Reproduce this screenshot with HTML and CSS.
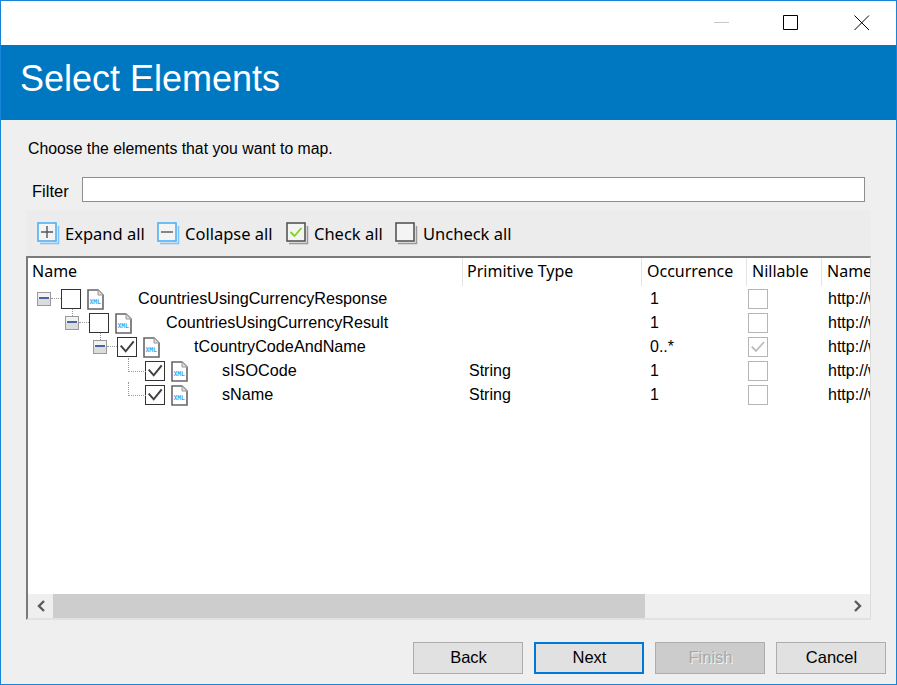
FILE: index.html
```html
<!DOCTYPE html>
<html lang="en">
<head>
    <meta charset="UTF-8">
    <meta name="viewport" content="width=device-width, initial-scale=1.0">
    <title>Select Elements</title>
    <link rel="stylesheet" href="styles.css">
</head>
<body>
    <div class="window">
        <div class="titlebar">
            <svg class="winbtn winbtn-min" width="16" height="16"><path d="M0 7.5H15" stroke="#c8c8c8" fill="none"/></svg>
            <svg class="winbtn" width="16" height="16"><path d="M.5.5H14.5V14.5H.5Z" stroke="#000" fill="none"/></svg>
            <svg class="winbtn" width="16" height="16"><path d="M.5.5L15 15M15 .5L.5 15" stroke="#000" fill="none"/></svg>
        </div>
        <div class="banner">Select Elements</div>

        <div class="content">
            <p class="intro">Choose the elements that you want to map.</p>
            <div class="filter">
                <label>Filter</label>
                <input type="text">
            </div>

            <div class="toolbar">
                <div class="tool tool-expand">
                    <svg width="23" height="23" viewBox="0 0 23 23"><path d="M3 21.5H21.5V4" fill="none" stroke="#7cc4fa" stroke-width="1.5"/><rect x="1" y="1" width="18" height="18" fill="#f4f4f4" stroke="#4fb0f8" stroke-width="1.6"/><path d="M10 4V16M4 10H16" stroke="#555" stroke-width="1.4"/></svg>
                    <span>Expand all</span>
                </div>
                <div class="tool tool-collapse">
                    <svg width="23" height="23" viewBox="0 0 23 23"><path d="M3 21.5H21.5V4" fill="none" stroke="#7cc4fa" stroke-width="1.5"/><rect x="1" y="1" width="18" height="18" fill="#f4f4f4" stroke="#4fb0f8" stroke-width="1.6"/><path d="M4 10H16" stroke="#555" stroke-width="1.4"/></svg>
                    <span>Collapse all</span>
                </div>
                <div class="tool tool-check">
                    <svg width="23" height="23" viewBox="0 0 23 23"><path d="M3 21.5H21.5V4" fill="none" stroke="#999" stroke-width="1.5"/><rect x="1" y="1" width="18" height="18" fill="#f4f4f4" stroke="#555" stroke-width="1.6"/><path d="M4.5 10L8.5 14L15.5 6" fill="none" stroke="#7ed321" stroke-width="1.8"/></svg>
                    <span>Check all</span>
                </div>
                <div class="tool tool-uncheck">
                    <svg width="23" height="23" viewBox="0 0 23 23"><path d="M3 21.5H21.5V4" fill="none" stroke="#999" stroke-width="1.5"/><rect x="1" y="1" width="18" height="18" fill="#f4f4f4" stroke="#555" stroke-width="1.6"/></svg>
                    <span>Uncheck all</span>
                </div>
            </div>

            <div class="grid-box">
                <div class="grid-scroll">
                    <div class="row head">
                        <div>Name</div>
                        <div>Primitive Type</div>
                        <div>Occurrence</div>
                        <div>Nillable</div>
                        <div>Name</div>
                    </div>

                    <div class="row item">
                        <div class="tree level0 link-down">
                            <span class="expander"></span>
                            <span class="check"></span>
                            <svg class="xml" width="17" height="21" viewBox="0 0 17 21"><path d="M1 1H11L16 6V20H1Z" fill="#fff" stroke="#666" stroke-width="1.6"/><path d="M11 1V6H16" fill="#ddd" stroke="#999"/><text x="2.4" y="15" class="xml-text">XML</text></svg>
                            <span class="label">CountriesUsingCurrencyResponse</span>
                        </div>
                        <div class="type"></div>
                        <div class="occ">1</div>
                        <div class="nil-cell"><span class="nil"></span></div>
                        <div class="ns">http://www</div>
                    </div>

                    <div class="row item">
                        <div class="tree level1 link-down">
                            <span class="expander"></span>
                            <span class="check"></span>
                            <svg class="xml" width="17" height="21" viewBox="0 0 17 21"><path d="M1 1H11L16 6V20H1Z" fill="#fff" stroke="#666" stroke-width="1.6"/><path d="M11 1V6H16" fill="#ddd" stroke="#999"/><text x="2.4" y="15" class="xml-text">XML</text></svg>
                            <span class="label">CountriesUsingCurrencyResult</span>
                        </div>
                        <div class="type"></div>
                        <div class="occ">1</div>
                        <div class="nil-cell"><span class="nil"></span></div>
                        <div class="ns">http://www</div>
                    </div>

                    <div class="row item">
                        <div class="tree level2">
                            <span class="expander"></span>
                            <span class="check"><svg width="18" height="18" viewBox="0 0 18 18"><path d="M2.7 7.7L7.7 13.3L15.7 3.3" fill="none" stroke="#3f3f3f" stroke-width="2"/></svg></span>
                            <svg class="xml" width="17" height="21" viewBox="0 0 17 21"><path d="M1 1H11L16 6V20H1Z" fill="#fff" stroke="#666" stroke-width="1.6"/><path d="M11 1V6H16" fill="#ddd" stroke="#999"/><text x="2.4" y="15" class="xml-text">XML</text></svg>
                            <span class="label">tCountryCodeAndName</span>
                        </div>
                        <div class="type"></div>
                        <div class="occ">0..*</div>
                        <div class="nil-cell"><span class="nil"><svg width="18" height="18" viewBox="0 0 18 18"><path d="M2.7 8.7L7 13L15 4" fill="none" stroke="#bbb" stroke-width="1.8"/></svg></span></div>
                        <div class="ns">http://www</div>
                    </div>

                    <div class="row item">
                        <div class="tree level3 leaf">
                            <span class="check"><svg width="18" height="18" viewBox="0 0 18 18"><path d="M2.7 7.7L7.7 13.3L15.7 3.3" fill="none" stroke="#3f3f3f" stroke-width="2"/></svg></span>
                            <svg class="xml" width="17" height="21" viewBox="0 0 17 21"><path d="M1 1H11L16 6V20H1Z" fill="#fff" stroke="#666" stroke-width="1.6"/><path d="M11 1V6H16" fill="#ddd" stroke="#999"/><text x="2.4" y="15" class="xml-text">XML</text></svg>
                            <span class="label">sISOCode</span>
                        </div>
                        <div class="type">String</div>
                        <div class="occ">1</div>
                        <div class="nil-cell"><span class="nil"></span></div>
                        <div class="ns">http://www</div>
                    </div>

                    <div class="row item">
                        <div class="tree level3 leaf">
                            <span class="check"><svg width="18" height="18" viewBox="0 0 18 18"><path d="M2.7 7.7L7.7 13.3L15.7 3.3" fill="none" stroke="#3f3f3f" stroke-width="2"/></svg></span>
                            <svg class="xml" width="17" height="21" viewBox="0 0 17 21"><path d="M1 1H11L16 6V20H1Z" fill="#fff" stroke="#666" stroke-width="1.6"/><path d="M11 1V6H16" fill="#ddd" stroke="#999"/><text x="2.4" y="15" class="xml-text">XML</text></svg>
                            <span class="label">sName</span>
                        </div>
                        <div class="type">String</div>
                        <div class="occ">1</div>
                        <div class="nil-cell"><span class="nil"></span></div>
                        <div class="ns">http://www</div>
                    </div>
                </div>

                <div class="hscroll">
                    <div class="arrow"><svg width="10" height="12" viewBox="0 0 10 12"><path d="M8 1L3 6L8 11" fill="none" stroke="#5a5a5a" stroke-width="2.4"/></svg></div>
                    <div class="track"><div class="thumb"></div></div>
                    <div class="arrow"><svg width="10" height="12" viewBox="0 0 10 12"><path d="M2 1L7 6L2 11" fill="none" stroke="#5a5a5a" stroke-width="2.4"/></svg></div>
                </div>
            </div>

            <div class="buttons">
                <button>Back</button>
                <button class="primary">Next</button>
                <button class="disabled">Finish</button>
                <button>Cancel</button>
            </div>
        </div>
    </div>
</body>
</html>
```

FILE: styles.css
```css
* {
    box-sizing: border-box;
}
html, body {
    margin: 0;
    height: 100%;
}
body {
    font-family: "Liberation Sans", Arial, sans-serif;
    font-size: 16px;
    color: #000;
    background: #efefef;
    overflow: hidden;
}
.window {
    width: 897px;
    height: 685px;
    border: 1px solid #1883d7;
    display: flex;
    flex-direction: column;
}
.titlebar {
    height: 44px;
    background: #fff;
    display: flex;
    align-items: flex-start;
    justify-content: flex-end;
    padding: 14px 26px 0 0;
    gap: 55px;
}
.winbtn-min {
    margin-right: -2px;
}
.banner {
    height: 75px;
    background: #0078c1;
    color: #fff;
    font-size: 36px;
    line-height: 67px;
    padding-left: 19px;
}
.content {
    flex: 1;
    padding: 0 10px 0 25px;
    background: #efefef;
}
.intro {
    margin: 0;
    padding: 20px 0 0 2px;
    line-height: 18px;
    font-size: 15.8px;
}
.filter {
    display: flex;
    align-items: center;
    margin-top: 19px;
    padding-left: 6px;
}
.filter label {
    width: 50px;
    font-size: 16.5px;
    padding-top: 4px;
}
.filter input {
    width: 783px;
    height: 25px;
    border: 1px solid #8e8e8e;
    background: #fff;
    padding: 0 4px;
}
.toolbar {
    width: 845px;
    height: 46px;
    margin-top: 8px;
    background: #ececec;
    display: flex;
    align-items: center;
    font-family: "Noto Sans", sans-serif;
    font-size: 16.5px;
}
.tool {
    display: flex;
    align-items: center;
}
.tool span {
    padding-top: 1px;
}
.tool svg {
    margin-right: 5px;
}
.tool-expand {
    margin-left: 11px;
    width: 120px;
}
.tool-collapse {
    width: 129px;
}
.tool-check {
    width: 109px;
}
.grid-box {
    width: 845px;
    height: 364px;
    background: #fff;
    border-top: 2px solid #7a7a7a;
    border-left: 2px solid #7a7a7a;
    border-right: 1px solid #dcdcdc;
    border-bottom: 2px solid #e2e2e2;
    display: flex;
    flex-direction: column;
}
.grid-scroll {
    flex: 1;
    overflow: hidden;
}
.row {
    display: grid;
    grid-template-columns: 435px 179px 105px 75px 48px;
    white-space: nowrap;
}
.head {
    height: 28px;
    font-family: "Noto Sans", sans-serif;
    font-size: 16px;
    line-height: 27px;
}
.head div {
    padding-left: 5px;
    border-right: 1px solid #e4e4e4;
    overflow: hidden;
}
.head div:nth-child(-n+2) {
    padding-left: 4px;
}
.head div:last-child {
    border-right: none;
}
.item {
    height: 24px;
    grid-template-rows: 24px;
    line-height: 26px;
}
.tree {
    display: flex;
    align-items: center;
    position: relative;
    padding-top: 2px;
    font-size: 16.2px;
    line-height: 22px;
}
.level0 { padding-left: 9px; }
.level1 { padding-left: 37px; }
.level2 { padding-left: 65px; }
.level3 { padding-left: 107px; }
.expander {
    width: 14px;
    height: 14px;
    border: 1px solid #9a9a9a;
    background: linear-gradient(#f2f2f2 50%, #dcdcdc 50%);
    position: relative;
    flex: none;
}
.expander::before {
    content: "";
    position: absolute;
    left: 1px;
    right: 1px;
    top: 4px;
    height: 2px;
    background: #4a63a5;
}
.expander::after {
    content: "";
    position: absolute;
    left: 13px;
    top: 5px;
    width: 10px;
    border-top: 1px dotted #999;
}
.check {
    width: 20px;
    height: 20px;
    margin-left: 10px;
    border: 1px solid #333;
    background: #fff;
    flex: none;
    display: block;
}
.check svg, .nil svg {
    display: block;
}
.xml {
    margin-left: 6px;
    flex: none;
}
.xml-text {
    font-family: "DejaVu Sans Mono", monospace;
    font-size: 6.4px;
    font-weight: bold;
    fill: #39a7f5;
}
.label {
    margin-left: 34px;
    margin-bottom: 2px;
}
.link-down::after {
    content: "";
    position: absolute;
    left: 44px;
    top: 23px;
    height: 7px;
    border-left: 1px dotted #999;
}
.level1.link-down::after {
    left: 72px;
}
.leaf::before {
    content: "";
    position: absolute;
    left: 100px;
    top: 0;
    width: 17px;
    height: 13px;
    border-left: 1px dotted #999;
    border-bottom: 1px dotted #999;
}
.type {
    padding-left: 6px;
}
.occ {
    padding-left: 8px;
}
.nil-cell {
    padding-left: 1px;
}
.nil {
    display: block;
    width: 20px;
    height: 20px;
    margin-top: 3px;
    border: 1px solid #b5b5b5;
    background: #fff;
}
.ns {
    padding-left: 6px;
    overflow: hidden;
}
.hscroll {
    height: 24px;
    background: #efefef;
    display: flex;
}
.arrow {
    width: 25px;
    display: flex;
    align-items: center;
    justify-content: center;
    flex: none;
}
.track {
    flex: 1;
}
.thumb {
    width: 592px;
    height: 24px;
    background: #cdcdcd;
}
.buttons {
    display: flex;
    justify-content: flex-end;
    gap: 11px;
    margin-top: 22px;
}
button {
    width: 110px;
    height: 32px;
    font-family: "Liberation Sans", Arial, sans-serif;
    font-size: 16.5px;
    background: #e1e1e1;
    border: 1px solid #adadad;
    color: #000;
    padding: 0 0 2px 1px;
}
button.primary {
    border: 2px solid #0078d7;
}
button.disabled {
    background: #cccccc;
    color: #a8a8a8;
    text-shadow: 1px 1px 0 #f4f4f4;
}
```
